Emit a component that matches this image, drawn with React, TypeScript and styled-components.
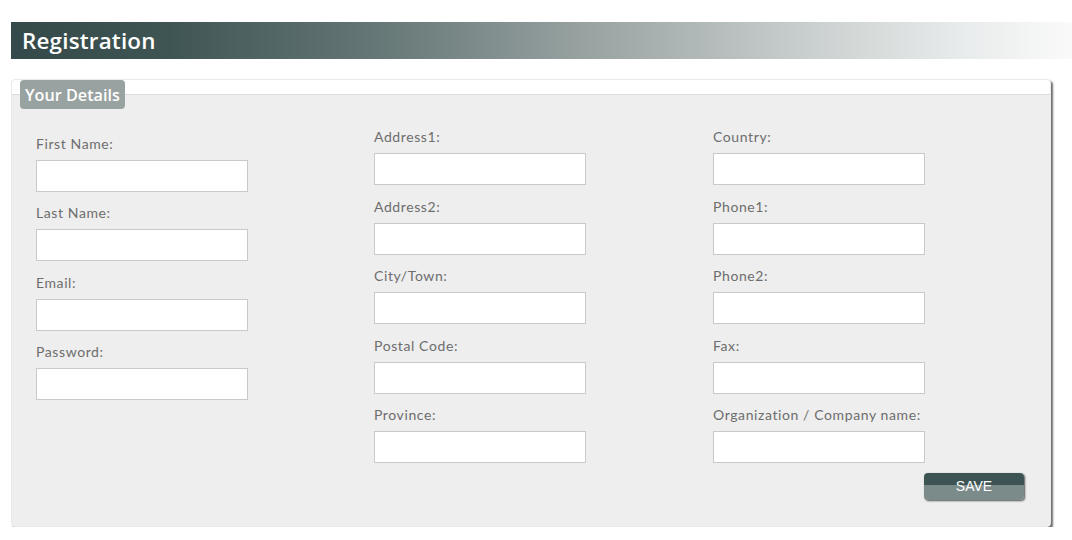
import React from "react";
import styled, { createGlobalStyle } from "styled-components";

const Global = createGlobalStyle`
  html, body { margin: 0; padding: 0; background: #ffffff; }
  body { font-family: "Lato", "Open Sans", sans-serif; }
  * { box-sizing: border-box; }
`;

const Page = styled.div`
  padding: 22px 0 0 11px;
  width: 1072px;
`;

const TitleBar = styled.div`
  height: 37px;
  display: flex;
  align-items: center;
  padding-left: 11px;
  background: linear-gradient(
    to right,
    #344a4a 0%,
    #3f5554 15%,
    #667877 35%,
    #9aa4a3 55%,
    #c9cfce 75%,
    #e9ecec 90%,
    #fafafa 100%
  );
`;

const Title = styled.h1`
  margin: 0;
  font-family: "Open Sans", "Lato", sans-serif;
  font-weight: 600;
  font-size: 22.4px;
  color: #ffffff;
  letter-spacing: 0.2px;
`;

const Box = styled.div`
  position: relative;
  margin: 20px 21px 0 0;
  padding-top: 14px;
  background: #ffffff;
  border: 1px solid #e9e9e9;
  border-radius: 4px;
  box-shadow: 2px 2px 2px #6e6e6e;
`;

const Legend = styled.div`
  position: absolute;
  top: 0;
  left: 8px;
  height: 29px;
  padding: 0 5px;
  display: flex;
  align-items: center;
  background: #98a2a0;
  border-radius: 4px;
  color: #ffffff;
  font-family: "Open Sans", "Lato", sans-serif;
  font-weight: 600;
  font-size: 16.2px;
`;

const Panel = styled.div`
  background: #eeeeee;
  border-top: 1px solid #dcdcdc;
  border-radius: 0 0 4px 4px;
  padding: 33px 26px 26px 24px;
  display: flex;
  flex-direction: column;
`;

const Columns = styled.div`
  display: grid;
  grid-template-columns: 338px 339px 1fr;
`;

const Column = styled.div<{ $offset?: number; $pitch: number }>`
  display: flex;
  flex-direction: column;
  padding-top: ${(p) => p.$offset ?? 0}px;
  --pitch: ${(p) => p.$pitch}px;
`;

const Field = styled.div`
  display: flex;
  flex-direction: column;
  height: var(--pitch, 69.5px);
`;

const Label = styled.label`
  font-family: "Lato", "Open Sans", sans-serif;
  font-size: 14px;
  line-height: 18px;
  letter-spacing: 0.6px;
  color: #6d6d6d;
  margin-bottom: 7px;
`;

const Input = styled.input`
  width: 212px;
  height: 32px;
  background: #ffffff;
  border: 1px solid #c9c9c9;
  outline: none;
  padding: 0 6px;
  font-size: 14px;
`;

const Actions = styled.div`
  display: flex;
  justify-content: flex-end;
  margin-top: -3px;
`;

const SaveButton = styled.button`
  width: 100px;
  height: 27px;
  border: none;
  border-radius: 4px;
  background: linear-gradient(to bottom, #3c5453 0%, #3c5453 45%, #7a8b8a 45%, #7a8b8a 100%);
  box-shadow: 1px 1px 2px #555;
  color: #ffffff;
  font-family: "Liberation Sans", Arial, sans-serif;
  font-size: 14px;
  cursor: pointer;
`;

const col1 = ["First Name:", "Last Name:", "Email:", "Password:"];
const col2 = ["Address1:", "Address2:", "City/Town:", "Postal Code:", "Province:"];
const col3 = ["Country:", "Phone1:", "Phone2:", "Fax:", "Organization / Company name:"];

const FieldList = ({ labels }: { labels: string[] }) => (
  <>
    {labels.map((l) => (
      <Field key={l}>
        <Label>{l}</Label>
        <Input type={l === "Password:" ? "password" : "text"} />
      </Field>
    ))}
  </>
);

export default function App() {
  return (
    <>
      <Global />
      <Page>
        <TitleBar>
          <Title>Registration</Title>
        </TitleBar>
        <Box>
          <Legend>Your Details</Legend>
          <Panel>
            <Columns>
              <Column $offset={7} $pitch={69.3}>
                <FieldList labels={col1} />
              </Column>
              <Column $pitch={69.5}>
                <FieldList labels={col2} />
              </Column>
              <Column $pitch={69.5}>
                <FieldList labels={col3} />
              </Column>
            </Columns>
            <Actions>
              <SaveButton>SAVE</SaveButton>
            </Actions>
          </Panel>
        </Box>
      </Page>
    </>
  );
}
